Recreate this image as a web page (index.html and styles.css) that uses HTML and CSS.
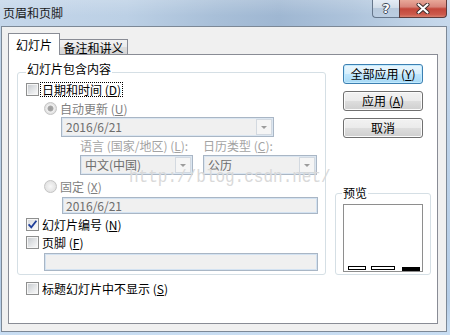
FILE: index.html
```html
<!DOCTYPE html>
<html lang="zh-CN">
<head>
<meta charset="utf-8">
<title>页眉和页脚</title>
<link rel="stylesheet" href="styles.css">
</head>
<body>
<div class="window">
  <div class="titlebar">
    <span class="title">页眉和页脚</span>
    <div class="caps">
      <div class="cap help">?</div>
      <div class="cap close">
        <svg width="14" height="11" viewBox="0 0 14 11">
          <path d="M2.5 1.5 L11.5 9.5 M11.5 1.5 L2.5 9.5" stroke="#3a2a2a" stroke-width="4" stroke-linecap="round" fill="none"/>
          <path d="M2.5 1.5 L11.5 9.5 M11.5 1.5 L2.5 9.5" stroke="#ffffff" stroke-width="2.2" stroke-linecap="round" fill="none"/>
        </svg>
      </div>
    </div>
  </div>
  <div class="client">
    <div class="tabs">
      <div class="tab active">幻灯片</div>
      <div class="tab">备注和讲义</div>
    </div>
    <div class="panel">
      <div class="left">
        <div class="group main-group">
          <div class="group-title">幻灯片包含内容</div>
          <div class="row row-date">
            <span class="cb"></span><span class="lbl focus">日期和时间 (<u>D</u>)</span>
          </div>
          <div class="row row-auto">
            <span class="rb checked"></span><span class="lbl dis">自动更新 (<u>U</u>)</span>
          </div>
          <div class="combo combo-date"><span class="combo-text">2016/6/21</span><span class="combo-btn"><span class="arrow"></span></span></div>
          <div class="lang-grid">
            <span class="field-label">语言 (国家/地区) (<u>L</u>):</span>
            <span class="field-label">日历类型 (<u>C</u>):</span>
            <div class="combo"><span class="combo-text">中文(中国)</span><span class="combo-btn"><span class="arrow"></span></span></div>
            <div class="combo"><span class="combo-text">公历</span><span class="combo-btn"><span class="arrow"></span></span></div>
          </div>
          <div class="row row-fixed">
            <span class="rb"></span><span class="lbl dis">固定 (<u>X</u>)</span>
          </div>
          <div class="textbox textbox-fixed">2016/6/21</div>
          <div class="row row-num">
            <span class="cb checked"><svg width="11" height="11" viewBox="0 0 11 11"><path d="M1.6 5.4 L4.3 8.4 L9.4 1.8" stroke="#1f3f9a" stroke-width="1.8" fill="none"/></svg></span><span class="lbl">幻灯片编号 (<u>N</u>)</span>
          </div>
          <div class="row row-footer">
            <span class="cb"></span><span class="lbl">页脚 (<u>F</u>)</span>
          </div>
          <div class="textbox textbox-footer"></div>
        </div>
        <div class="row row-title">
          <span class="cb"></span><span class="lbl">标题幻灯片中不显示 (<u>S</u>)</span>
        </div>
      </div>
      <div class="right">
        <div class="buttons">
          <div class="btn default">全部应用 (<u>Y</u>)</div>
          <div class="btn">应用 (<u>A</u>)</div>
          <div class="btn">取消</div>
        </div>
        <div class="group preview-group">
          <div class="group-title">预览</div>
          <div class="preview-box">
            <span class="bar"></span><span class="bar wide"></span><span class="bar filled"></span>
          </div>
        </div>
      </div>
      <div class="watermark">http://blog.csdn.net/</div>
    </div>
  </div>
</div>
</body>
</html>
```

FILE: styles.css
```css
html, body {
  margin: 0;
  padding: 0;
}
body {
  width: 450px;
  height: 335px;
  overflow: hidden;
  background: linear-gradient(180deg, #c3d6ea 0%, #b4cce6 90%, #c9def3 100%);
  font-family: "Noto Sans CJK SC", "Noto Sans", sans-serif;
  font-size: 12px;
  color: #000;
}
.window {
  display: flex;
  flex-direction: column;
  height: 335px;
}
.titlebar {
  flex: none;
  height: 26px;
  display: flex;
  align-items: flex-start;
  background:
    linear-gradient(180deg, rgba(255,255,255,0.18) 0%, rgba(255,255,255,0) 60%),
    linear-gradient(90deg, #c4d6ea 0%, #bcd0e5 28%, #a8bfd8 48%, #9fb7d2 62%, #adc3db 78%, #c0d3e7 92%, #c7d9ec 100%);
}
.title {
  line-height: 26px;
  padding-left: 3px;
  color: #1a1a1a;
}
.caps {
  display: flex;
  margin-left: auto;
  margin-right: 3px;
  height: 18px;
}
.cap {
  box-sizing: border-box;
  height: 18px;
  display: flex;
  align-items: center;
  justify-content: center;
}
.help {
  width: 27px;
  border: 1px solid #66778c;
  border-top: none;
  border-right: none;
  border-radius: 0 0 0 4px;
  background: linear-gradient(180deg, #e4ecf5 0%, #d2dde9 45%, #b8c9dc 50%, #bccee2 100%);
  color: #fff;
  font-family: "DejaVu Sans", sans-serif;
  font-weight: bold;
  font-size: 13px;
  line-height: 16px;
  text-shadow: 1px 0 0 #3d4b5c, -1px 0 0 #3d4b5c, 0 1px 0 #3d4b5c, 0 -1px 0 #3d4b5c;
}
.close {
  width: 48px;
  border: 1px solid #5e3b3b;
  border-top: none;
  border-radius: 0 0 4px 0;
  background: linear-gradient(180deg, #e8a899 0%, #d8857a 40%, #c3473a 52%, #cc5a4c 85%, #d9806e 100%);
}
.client {
  margin-left: 1px;
  width: 446px;
  height: 306px;
  box-sizing: border-box;
  border: 1px solid #7c8896;
  background: #f0f0f0;
  padding: 6px 0 0 6px;
}
.tabs {
  display: flex;
  align-items: flex-end;
  height: 21px;
}
.tab {
  box-sizing: border-box;
  width: 69px;
  height: 15px;
  margin-left: -1px;
  padding-top: 2px;
  border: 1px solid #898c95;
  border-bottom: none;
  background: linear-gradient(180deg, #f2f2f2 0%, #ebebeb 50%, #dddddd 51%, #d6d6d6 100%);
  display: flex;
  align-items: center;
  justify-content: center;
  line-height: 12px;
  white-space: nowrap;
}
.tab.active {
  width: 52px;
  height: 22px;
  margin-left: 0;
  margin-bottom: -1px;
  padding-top: 0;
  background: #fff;
  position: relative;
  z-index: 1;
}
.panel {
  box-sizing: border-box;
  width: 430px;
  height: 270px;
  border: 1px solid #898c95;
  background: #fff;
  display: flex;
  align-items: flex-start;
  position: relative;
  padding-left: 8px;
}
.left {
  width: 309px;
  margin-top: 17px;
}
.right {
  width: 96px;
  margin-left: 9px;
  margin-top: 9px;
}
.group {
  box-sizing: border-box;
  border: 1px solid #d5dfe5;
  border-radius: 3px;
}
.group-title {
  width: max-content;
  background: #fff;
  padding: 0 1px;
  line-height: 14px;
  white-space: nowrap;
}
.main-group {
  height: 203px;
  padding-left: 8px;
}
.main-group .group-title {
  margin-top: -11px;
}
.row {
  display: flex;
  align-items: center;
  height: 15px;
}
.row-date { margin-top: 6px; }
.row-auto { margin-top: 4px; padding-left: 18px; }
.row-fixed { margin-top: 4px; padding-left: 18px; }
.row-num { margin-top: 3px; }
.row-footer { margin-top: 3px; }
.row-title { margin-top: 6px; padding-left: 9px; }
.cb {
  flex: none;
  box-sizing: border-box;
  width: 13px;
  height: 13px;
  border: 1px solid #8e8f8f;
  background: linear-gradient(135deg, #c3c7cc 0%, #e4e6e8 55%, #fbfbfb 100%);
  box-shadow: inset 0 0 0 1px #f6f6f6;
  display: flex;
  align-items: center;
  justify-content: center;
}
.cb.checked {
  background: linear-gradient(135deg, #d4d7db 0%, #eeeff0 55%, #fdfdfd 100%);
}
.rb {
  flex: none;
  box-sizing: border-box;
  width: 13px;
  height: 13px;
  border-radius: 50%;
  border: 1px solid #c4c4c4;
  background: radial-gradient(circle at 50% 50%, #f7f7f7 0%, #e6e6e6 60%, #d8d8d8 100%);
}
.rb.checked {
  background: radial-gradient(circle at 50% 50%, #9b9b9b 0, #a6a6a6 2.6px, #f4f4f4 3.4px, #e4e4e4 4.6px, #d6d6d6 100%);
}
.lbl {
  margin-left: 1px;
  border: 1px dotted transparent;
  padding: 0 1px;
  line-height: 13px;
  white-space: nowrap;
}
.lbl.focus {
  border-color: #000;
}
.dis {
  color: #7f7f7f;
}
u {
  text-underline-offset: 1px;
}
.combo {
  box-sizing: border-box;
  height: 20px;
  display: flex;
  align-items: center;
  border: 1px solid #a9b6c5;
  background: #f0f0f0;
  box-shadow: inset 0 0 0 1px #dbe6f1;
  padding-left: 4px;
  color: #6d6d6d;
}
.combo-date {
  margin: 1px 0 0 35px;
  width: 213px;
}
.combo-text {
  flex: 1;
  line-height: 12px;
  white-space: nowrap;
}
.combo-btn {
  box-sizing: border-box;
  width: 16px;
  height: 16px;
  margin-right: 1px;
  border: 1px solid #d3d9e0;
  background: #f5f5f5;
  display: flex;
  align-items: center;
  justify-content: center;
}
.arrow {
  width: 0;
  height: 0;
  border-left: 3px solid transparent;
  border-right: 3px solid transparent;
  border-top: 3px solid #9c9c9c;
  margin-top: 1px;
}
.lang-grid {
  display: grid;
  grid-template-columns: 113px 114px;
  column-gap: 10px;
  row-gap: 2px;
  margin: 2px 0 0 54px;
}
.field-label {
  line-height: 14px;
  color: #a3a3a3;
  white-space: nowrap;
}
.textbox {
  box-sizing: border-box;
  border: 1px solid #a9b6c5;
  background: #f0f0f0;
  box-shadow: inset 0 0 0 1px #d3e2f1;
  padding-left: 3px;
  color: #6d6d6d;
  line-height: 15px;
}
.textbox-fixed {
  margin: 3px 0 0 36px;
  width: 256px;
  height: 17px;
}
.textbox-footer {
  margin: 3px 0 0 18px;
  width: 274px;
  height: 18px;
}
.buttons {
  display: flex;
  flex-direction: column;
  gap: 7px;
  padding-left: 8px;
}
.btn {
  box-sizing: border-box;
  width: 80px;
  height: 20px;
  border: 1px solid #707070;
  border-radius: 3px;
  background: linear-gradient(180deg, #f2f2f2 0%, #ebebeb 48%, #dddddd 52%, #cfcfcf 100%);
  box-shadow: inset 0 0 0 1px #fbfbfb;
  display: flex;
  align-items: center;
  justify-content: center;
  line-height: 14px;
  white-space: nowrap;
}
.btn.default {
  border-color: #3c7fb1;
  background: linear-gradient(180deg, #eaf6fd 0%, #d9f0fc 48%, #bee6fd 52%, #a7d9f5 100%);
  box-shadow: inset 0 0 0 1px #c2ebff;
}
.preview-group {
  margin-top: 55px;
  height: 82px;
}
.preview-group .group-title {
  margin: -8px 0 0 6px;
}
.preview-box {
  box-sizing: border-box;
  width: 80px;
  height: 68px;
  margin: 4px 0 0 7px;
  border: 1px solid #8e8e8e;
  display: flex;
  align-items: flex-end;
  padding: 0 0 1px 4px;
}
.bar {
  box-sizing: border-box;
  width: 18px;
  height: 4px;
  border: 1px solid #000;
  margin-right: 5px;
}
.bar.wide {
  width: 24px;
  margin-right: 7px;
}
.bar.filled {
  background: #000;
  margin-right: 0;
  margin-bottom: -1px;
}
.watermark {
  position: absolute;
  left: 120px;
  top: 117px;
  font-family: "Liberation Mono", monospace;
  font-size: 16px;
  line-height: 10px;
  color: #d9d9d9;
  white-space: nowrap;
  pointer-events: none;
  z-index: 2;
  transform: scaleY(1.2);
  transform-origin: 0 50%;
}
```
